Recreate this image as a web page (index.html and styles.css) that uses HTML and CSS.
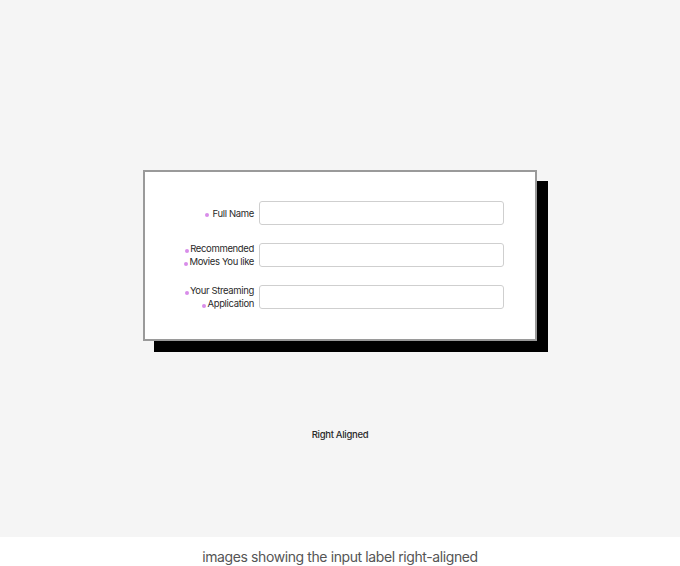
FILE: index.html
```html
<!DOCTYPE html>
<html lang="en">
<head>
<meta charset="utf-8">
<title>Right Aligned labels</title>
<link rel="stylesheet" href="styles.css">
</head>
<body>
<div class="panel">
  <form class="card">
    <div class="row">
      <label class="label" for="f1"><span class="line"><span class="dot"></span> Full Name</span></label>
      <input class="field" id="f1" type="text">
    </div>
    <div class="row">
      <label class="label" for="f2"><span class="line"><span class="dot"></span>Recommended</span><span class="line"><span class="dot"></span>Movies You like</span></label>
      <input class="field" id="f2" type="text">
    </div>
    <div class="row">
      <label class="label" for="f3"><span class="line"><span class="dot"></span>Your Streaming</span><span class="line"><span class="dot"></span>Application</span></label>
      <input class="field" id="f3" type="text">
    </div>
  </form>
  <div class="title">Right Aligned</div>
</div>
<p class="caption">images showing the input label right-aligned</p>
</body>
</html>
```
FILE: styles.css
```css
html, body {
  margin: 0;
  padding: 0;
  background: #ffffff;
}
body {
  width: 680px;
  height: 566px;
  overflow: hidden;
  font-family: "Inter", "Noto Sans", sans-serif;
}
.panel {
  height: 537px;
  background: #f5f5f5;
  display: flex;
  flex-direction: column;
  align-items: center;
  padding-top: 170px;
  box-sizing: border-box;
}
.card {
  width: 394px;
  box-sizing: border-box;
  margin: 0;
  background: #ffffff;
  border: 2px solid #9a9a9a;
  box-shadow: 11px 11px 0 #000000;
  padding: 28px 31px 29px 20px;
  display: flex;
  flex-direction: column;
  gap: 16px;
}
.row {
  height: 26px;
  display: grid;
  grid-template-columns: 1fr 245px;
  column-gap: 5px;
  align-items: center;
}
.label {
  display: flex;
  flex-direction: column;
  align-items: flex-end;
  font-size: 9.5px;
  line-height: 13px;
  color: #2a2a2a;
  letter-spacing: -0.35px;
}
.line {
  display: flex;
  align-items: center;
  white-space: pre;
}
.dot {
  width: 4px;
  height: 4px;
  border-radius: 50%;
  background: #d88de9;
  margin-top: 4px;
  margin-right: 1px;
}
.field {
  height: 24px;
  box-sizing: border-box;
  margin: 0;
  border: 1px solid #cfcfcf;
  border-radius: 3px;
  background: #ffffff;
  padding: 0 6px;
}
.title {
  margin-top: 88px;
  font-size: 9.5px;
  font-weight: 500;
  line-height: 12px;
  color: #2a2a2a;
  letter-spacing: -0.3px;
}
.caption {
  margin: 0;
  padding-top: 11px;
  text-align: center;
  font-size: 14px;
  line-height: 18px;
  color: #555555;
  letter-spacing: -0.4px;
}
```
